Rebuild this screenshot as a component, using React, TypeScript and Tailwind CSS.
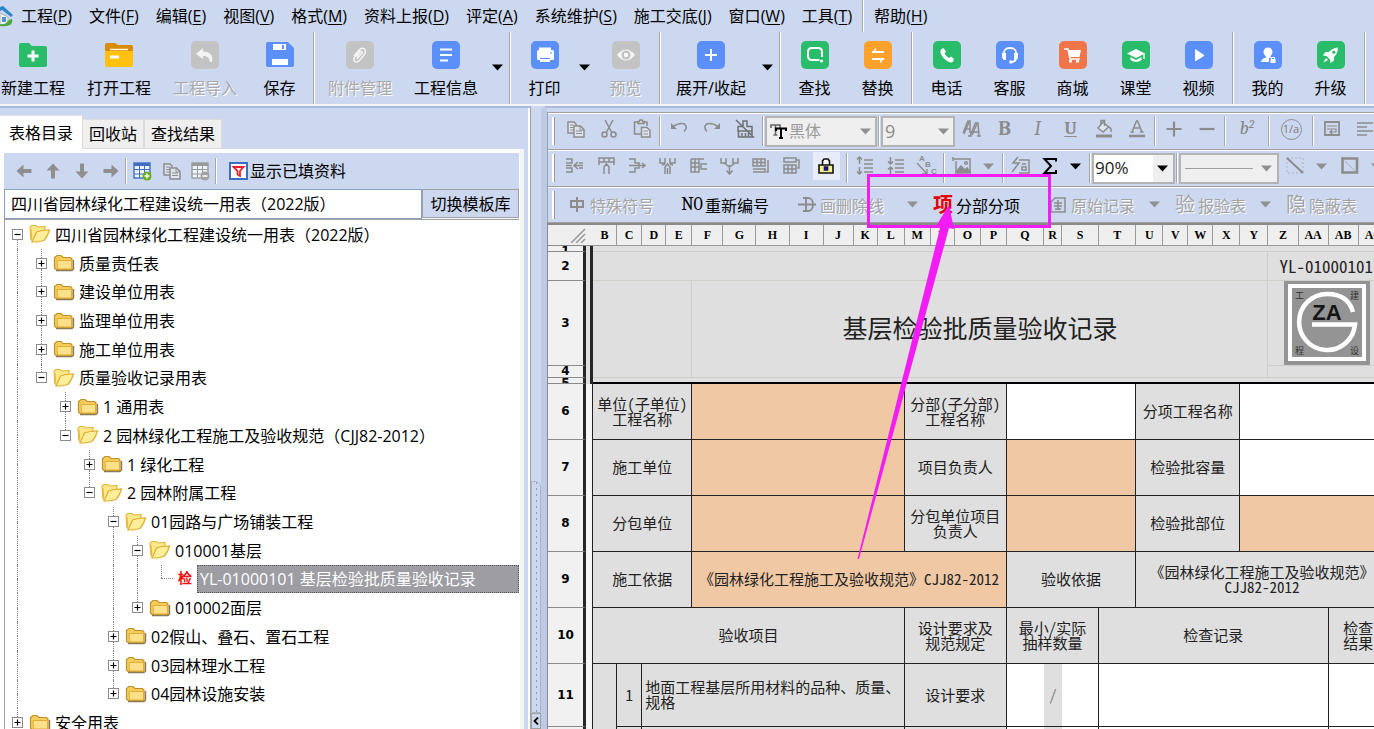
import type { ReactNode } from "react";

/* ---------- shared bits ---------- */

function Sep({ className = "" }: { className?: string }) {
  return <span className={`w-[2px] shrink-0 border-l border-[#a6a6a6] bg-white ${className}`} />;
}

function Caret({ color = "#000" }: { color?: string }) {
  return (
    <svg width="12" height="7" viewBox="0 0 12 7" className="shrink-0" aria-hidden="true">
      <path d="M0 0.5H11L5.5 6.5Z" fill={color} />
    </svg>
  );
}

/** Outline glyph used by the grey editing toolbars. */
function Ico({
  children,
  size = 20,
  color = "#8c8c8c",
  width = 1.5,
}: {
  children: ReactNode;
  size?: number;
  color?: string;
  width?: number;
}) {
  return (
    <svg
      width={size}
      height={size}
      viewBox="0 0 20 20"
      fill="none"
      stroke={color}
      strokeWidth={width}
      className="shrink-0"
      aria-hidden="true"
    >
      {children}
    </svg>
  );
}

/* ---------- menu bar ---------- */

const MENUS: [string, string][] = [
  ["工程", "P"],
  ["文件", "F"],
  ["编辑", "E"],
  ["视图", "V"],
  ["格式", "M"],
  ["资料上报", "D"],
  ["评定", "A"],
  ["系统维护", "S"],
  ["施工交底", "J"],
  ["窗口", "W"],
  ["工具", "T"],
];

function MenuItem({ label, hotkey }: { label: string; hotkey: string }) {
  return (
    <button type="button" className="h-full shrink-0 px-2 whitespace-nowrap">
      {label}(<span className="underline underline-offset-2">{hotkey}</span>)
    </button>
  );
}

function MenuBar() {
  return (
    <nav className="flex h-8 items-center gap-px leading-8">
      <svg width="14" height="22" viewBox="0 0 14 22" className="-mr-[2px] shrink-0" aria-hidden="true">
        <path d="M0 8L8 12V19L0 20Z" fill="#f4f6f4" stroke="#9fb2c4" />
        <path d="M0 2L3 1L13 10L11 12L2 5L0 6Z" fill="#2f86c6" />
        <path d="M2 12H6V17H2Z" fill="#4f93cf" />
        <path d="M0 19Q5 20 7 17Q9 14 12 14Q13 18 10 20Q5 22 0 21Z" fill="#4ca641" />
      </svg>
      {MENUS.map(([label, hotkey]) => (
        <MenuItem key={label} label={label} hotkey={hotkey} />
      ))}
      <Sep className="mx-px h-full" />
      <MenuItem label="帮助" hotkey="H" />
    </nav>
  );
}

/* ---------- main toolbar ---------- */

const BLUE = "#5b8ff9";
const GREEN = "#29bd6b";
const GREY = "#c3c3c3";

function Tile({ fill, children }: { fill: string; children: ReactNode }) {
  return (
    <svg width="28" height="28" viewBox="0 0 28 28" aria-hidden="true">
      <rect width="28" height="28" rx="5" fill={fill} />
      {children}
    </svg>
  );
}

const bigIcons: Record<string, ReactNode> = {
  newProject: (
    <svg width="28" height="28" viewBox="0 0 28 28" aria-hidden="true">
      <path d="M0 4Q0 2 2 2H10L13 5H26Q28 5 28 7V24Q28 26 26 26H2Q0 26 0 24Z" fill={GREEN} />
      <path d="M14 9.500V20.500M8.500 15H19.500" stroke="#fff" strokeWidth="3" />
    </svg>
  ),
  openProject: (
    <svg width="28" height="28" viewBox="0 0 28 28" aria-hidden="true">
      <path d="M0 4Q0 2 2 2H10L13 4H26Q28 4 28 6V12H0Z" fill="#d98b08" />
      <path d="M0 10H28V24Q28 26 26 26H2Q0 26 0 24Z" fill="#ffc10d" />
      <path d="M5 8.500H23" stroke="#fff4d0" strokeWidth="1.500" />
      <path d="M5 16H14" stroke="#fff" strokeWidth="3" />
    </svg>
  ),
  importProject: (
    <Tile fill={GREY}>
      <path d="M12 7L5 13L12 18V15Q18 14 19 21H21Q23 11 12 10.500Z" fill="#f3f3f3" />
    </Tile>
  ),
  save: (
    <svg width="28" height="28" viewBox="0 0 28 28" aria-hidden="true">
      <path d="M0 3Q0 1 2 1H22L28 7V24Q28 26 26 26H2Q0 26 0 24Z" fill={BLUE} />
      <path d="M7 3H20V9H7Z" fill="#fff" />
      <path d="M17 4V8" stroke={BLUE} strokeWidth="2" />
      <path d="M6 18H22V24H6Z" fill="#fff" />
    </svg>
  ),
  attach: (
    <Tile fill={GREY}>
      <path
        d="M8 15L13 9Q16 6 18.500 8Q20.500 11 18 14L13 20Q10.500 22 8.500 20Q7 18 9 15.500L14.500 9.500M11 18L16.500 11.500Q15 9.500 13.500 12L10.500 16"
        fill="none"
        stroke="#f3f3f3"
        strokeWidth="1.500"
      />
    </Tile>
  ),
  info: (
    <Tile fill={BLUE}>
      <path d="M8 8.500H20M8 14H20M8 19.500H16" stroke="#fff" strokeWidth="1.800" />
    </Tile>
  ),
  print: (
    <Tile fill={BLUE}>
      <path d="M8 6.500H20V9H8Z" fill="#fff" />
      <rect x="6" y="9" width="17" height="10" rx="1.500" fill="#fff" />
      <path d="M9 18.500H19V21H9Z" fill="#fff" />
      <path d="M9 17.500H19M19 12H21" stroke={BLUE} />
    </Tile>
  ),
  preview: (
    <Tile fill={GREY}>
      <path d="M5 14Q14 3 23 14Q14 25 5 14Z" fill="#f6f6f6" />
      <circle cx="14" cy="14" r="4.500" fill={GREY} />
      <circle cx="14" cy="14" r="2.200" fill="#fff" />
    </Tile>
  ),
  expand: (
    <Tile fill={BLUE}>
      <path d="M14 8V20M8 14H20" stroke="#fff" strokeWidth="2" />
    </Tile>
  ),
  find: (
    <Tile fill={GREEN}>
      <path d="M18.500 19H11Q7 19 7 15V11Q7 7 11 7H17Q21 7 21 11V16" fill="none" stroke="#fff" strokeWidth="2" />
      <circle cx="20.500" cy="20" r="1.600" fill="#fff" />
    </Tile>
  ),
  replace: (
    <Tile fill="#ffa12b">
      <path d="M8 11H20M8 18H20" stroke="#fff" strokeWidth="2" />
      <path d="M12 6.500V12H7.500ZM16 22.500V17H20.500Z" fill="#fff" />
    </Tile>
  ),
  phone: (
    <Tile fill={GREEN}>
      <path
        d="M8 8.500L10.500 7L13 10.500L11.500 12.500Q13 15.500 16 17L18 15.500L21 18L20 20.500Q18 22.500 14 20Q9 16.500 7.500 12Q7 9.500 8 8.500Z"
        fill="#fff"
      />
    </Tile>
  ),
  service: (
    <Tile fill={BLUE}>
      <path d="M8 14Q7 7 14 7Q21 7 20 14M20 17Q20 21 15 21" fill="none" stroke="#fff" strokeWidth="1.800" />
      <path d="M6 12H10V19H8Q6 18 6 16ZM18 12H22V16Q22 18 20 19H18Z" fill="#fff" />
      <circle cx="15" cy="21" r="1.800" fill="#fff" />
    </Tile>
  ),
  cart: (
    <Tile fill="#f2754a">
      <path d="M5 8H9L11 18H21" fill="none" stroke="#fff" strokeWidth="1.500" />
      <path d="M9 9H22L20.500 16H10.500Z" fill="#fff" />
      <path d="M10 19H13V21.500H10ZM17 19H20V21.500H17Z" fill="#fff" />
    </Tile>
  ),
  lesson: (
    <Tile fill={GREEN}>
      <path d="M14 8L23 12.500L14 17L5 12.500Z" fill="#fff" />
      <path d="M8.500 16V19Q14 23 19.500 19V16L14 19Z" fill="#fff" />
      <path d="M22 12.500V18" stroke="#fff" strokeWidth="1.300" />
    </Tile>
  ),
  video: (
    <Tile fill={BLUE}>
      <path d="M10 8.500Q10 8 11 8.500L19 14Q19.500 14.500 19 15L11 20Q10 20.500 10 19.500Z" fill="#fff" />
    </Tile>
  ),
  mine: (
    <Tile fill={BLUE}>
      <circle cx="14" cy="11" r="4.500" fill="#fff" />
      <path d="M12 14H16L17 17H15V21H7Q8 17 12 16.500Z" fill="#fff" />
      <path d="M16.500 18H21.500V22H16.500Z" fill="#fff" />
      <path d="M17.500 18V16.500H20.500V18" fill="none" stroke="#fff" />
    </Tile>
  ),
  upgrade: (
    <Tile fill={GREEN}>
      <path
        d="M21 6.500Q15 7 12 11H8.500L6 14.500L9.500 15L13 18.500L13.500 22L17 19.500V16Q21 12 21 6.500Z"
        fill="#fff"
      />
      <path d="M9 17L6.500 21.500L11 19" fill="#fff" />
      <circle cx="16.800" cy="11.200" r="1.600" fill={GREEN} />
    </Tile>
  ),
};

type BigTool = { icon: string; label: string; disabled?: boolean; menu?: boolean };

const TOOL_GROUPS: BigTool[][] = [
  [
    { icon: "newProject", label: "新建工程" },
    { icon: "openProject", label: "打开工程" },
    { icon: "importProject", label: "工程导入", disabled: true },
    { icon: "save", label: "保存" },
  ],
  [
    { icon: "attach", label: "附件管理", disabled: true },
    { icon: "info", label: "工程信息", menu: true },
  ],
  [
    { icon: "print", label: "打印", menu: true },
    { icon: "preview", label: "预览", disabled: true },
  ],
  [{ icon: "expand", label: "展开/收起", menu: true }],
  [
    { icon: "find", label: "查找" },
    { icon: "replace", label: "替换" },
  ],
  [
    { icon: "phone", label: "电话" },
    { icon: "service", label: "客服" },
    { icon: "cart", label: "商城" },
    { icon: "lesson", label: "课堂" },
    { icon: "video", label: "视频" },
  ],
  [
    { icon: "mine", label: "我的" },
    { icon: "upgrade", label: "升级" },
  ],
];

function bigWidth(label: string) {
  if (label.length > 4) return "w-24";
  return label.length > 2 ? "w-[86px]" : "w-[63px]";
}

function MainToolbar() {
  return (
    <div className="-ml-[10px] flex h-[72px]">
      {TOOL_GROUPS.map((group, i) => (
        <div key={i} className="flex shrink-0">
          {group.map((t) => (
            <div key={t.label} className="flex">
              <button
                type="button"
                disabled={t.disabled}
                className={`flex flex-col items-center pt-[9px] ${bigWidth(t.label)} ${
                  t.disabled ? "text-[#a9a9a9] [text-shadow:1px_1px_0_#fff]" : "text-black"
                }`}
              >
                {bigIcons[t.icon]}
                <span className="mt-[7px] leading-6 whitespace-nowrap">{t.label}</span>
              </button>
              {t.menu && (
                <button type="button" aria-label={`${t.label}菜单`} className="flex w-[18px] justify-center pt-8">
                  <Caret />
                </button>
              )}
            </div>
          ))}
          <Sep className="mx-[2px]" />
        </div>
      ))}
    </div>
  );
}

/* ---------- left panel ---------- */

function ArrowIcon({ turn }: { turn: string }) {
  return (
    <svg width="16" height="16" viewBox="0 0 16 16" className={turn} aria-hidden="true">
      <path d="M0.500 8L7.500 1.500V6H15.500V10H7.500V14.500Z" fill="#8f8f8f" />
    </svg>
  );
}

function TableIcon({ color, badge, mark }: { color: string; badge: string; mark: string }) {
  return (
    <svg width="19" height="19" viewBox="0 0 19 19" aria-hidden="true">
      <rect x="1" y="1" width="16" height="15" fill="#eef3fb" stroke={color} strokeWidth="1.400" />
      <path d="M1 2.500H17" stroke={color} strokeWidth="3" />
      <path d="M1 7.500H17M1 12H17M6.500 3V16M11.500 3V16" stroke={color} />
      <circle cx="14" cy="14" r="4.500" fill={badge} />
      <path d={mark} stroke="#fff" strokeWidth="1.500" />
    </svg>
  );
}

function CopyGlyph() {
  return (
    <>
      <path d="M2 3H8L10 5V14H2Z" fill="#dfe5f0" />
      <path d="M4 6H8M4 8.500H8M4 11H8" strokeWidth="1" />
      <path d="M8 7H14.500L18 10.500V18H8Z" fill="#dfe5f0" />
      <path d="M14 7V11H18M10 12H16M10 14.500H16" strokeWidth="1" />
    </>
  );
}

type NodeState = "open" | "closed" | "doc";

interface TreeRow {
  /** One mark per ancestor level: "|" continues the guide line, " " leaves it blank. */
  guides: string;
  state: NodeState;
  label: string;
  /** The guide line goes on below this row. */
  more?: boolean;
  root?: boolean;
}

const TREE: TreeRow[] = [
  { guides: "", state: "open", label: "四川省园林绿化工程建设统一用表（2022版）", more: true, root: true },
  { guides: "|", state: "closed", label: "质量责任表", more: true },
  { guides: "|", state: "closed", label: "建设单位用表", more: true },
  { guides: "|", state: "closed", label: "监理单位用表", more: true },
  { guides: "|", state: "closed", label: "施工单位用表", more: true },
  { guides: "|", state: "open", label: "质量验收记录用表" },
  { guides: "| ", state: "closed", label: "1 通用表", more: true },
  { guides: "| ", state: "open", label: "2 园林绿化工程施工及验收规范（CJJ82-2012）" },
  { guides: "|  ", state: "closed", label: "1 绿化工程", more: true },
  { guides: "|  ", state: "open", label: "2 园林附属工程" },
  { guides: "|   ", state: "open", label: "01园路与广场铺装工程", more: true },
  { guides: "|   |", state: "open", label: "010001基层", more: true },
  { guides: "|   ||", state: "doc", label: "YL-01000101 基层检验批质量验收记录" },
  { guides: "|   |", state: "closed", label: "010002面层" },
  { guides: "|   ", state: "closed", label: "02假山、叠石、置石工程", more: true },
  { guides: "|   ", state: "closed", label: "03园林理水工程", more: true },
  { guides: "|   ", state: "closed", label: "04园林设施安装" },
  { guides: "", state: "closed", label: "安全用表" },
];

function Folder({ open }: { open: boolean }) {
  return open ? (
    <svg width="22" height="20" viewBox="0 0 22 20" className="shrink-0" aria-hidden="true">
      <path d="M2 16L1 3L3 1.500H7L9 3L16 2.500V6" fill="#fce88a" stroke="#e3b93c" strokeWidth="1.200" />
      <path d="M3 18L7.500 8L13 6.500L20.500 6Q19 12 15 16.500L8 18Z" fill="#fdee9b" stroke="#dfae2c" strokeWidth="1.200" />
      <path d="M3 18L2 5" stroke="#e3b93c" />
    </svg>
  ) : (
    <svg width="22" height="20" viewBox="0 0 22 20" className="shrink-0" aria-hidden="true">
      <path d="M3 17.500H19L20.500 16V7" fill="none" stroke="#8a7a55" strokeWidth="1.400" />
      <path d="M1.500 15V4.500L4 2.500H8L10 4.500H17.500L19 6V16.500H3Z" fill="#f5cc58" stroke="#c0902a" strokeWidth="1.200" />
      <path d="M4.500 16L4 7.500H18.500V16Z" fill="#fce08a" stroke="#e0ae3a" />
    </svg>
  );
}

function Guide({ top, bottom, children }: { top: boolean; bottom: boolean; children?: ReactNode }) {
  return (
    <span className="flex w-6 shrink-0 flex-col items-center self-stretch">
      <span className={`w-0 flex-1 border-l ${top ? "border-dotted border-[#808080]" : "border-transparent"}`} />
      {children}
      <span className={`w-0 flex-1 border-l ${bottom ? "border-dotted border-[#808080]" : "border-transparent"}`} />
    </span>
  );
}

function TreeItem({ row }: { row: TreeRow }) {
  const doc = row.state === "doc";
  return (
    <li className="flex min-h-0 flex-1 items-center">
      {row.guides.split("").map((g, i) => (
        <Guide key={i} top={g === "|"} bottom={g === "|"} />
      ))}
      {doc ? (
        <Guide top bottom={false}>
          <span className="h-0 w-3 translate-x-[6px] border-t border-dotted border-[#808080]" />
        </Guide>
      ) : (
        <Guide top={!row.root} bottom={!!row.more}>
          <button
            type="button"
            aria-label={row.state === "open" ? "折叠" : "展开"}
            className="flex size-[11px] items-center justify-center border border-[#8c8c8c] bg-white"
          >
            <svg width="7" height="7" viewBox="0 0 7 7" aria-hidden="true">
              <path d={row.state === "open" ? "M0.500 3.500H6.500" : "M0.500 3.500H6.500M3.500 0.500V6.500"} stroke="#000" strokeWidth="1.200" />
            </svg>
          </button>
        </Guide>
      )}
      {doc ? (
        <>
          <span className="w-6 shrink-0 text-center font-serif text-sm font-bold text-[#f01010]">检</span>
          <span className="flex flex-1 items-center self-stretch border border-dotted border-[#555] bg-[#9d9da3] text-white">
            <span className="pl-[2px] leading-6 whitespace-nowrap">{row.label}</span>
          </span>
        </>
      ) : (
        <>
          <Folder open={row.state === "open"} />
          <span className="pt-px pl-1 leading-6 whitespace-nowrap">{row.label}</span>
        </>
      )}
    </li>
  );
}

function LeftPanel() {
  return (
    <aside className="flex w-[531px] shrink-0 flex-col border-t-2 border-r border-t-[#a9badb] border-r-[#a0a0a0] pt-[7px] pr-[6px] shadow-[inset_-2px_0_0_#fff]">
      <div role="tablist" className="flex items-end">
        <button type="button" role="tab" aria-selected="true" className="h-[34px] border-t border-[#e0e0e0] bg-white px-[9px] leading-[28px]">
          表格目录
        </button>
        <button type="button" role="tab" aria-selected="false" className="h-[30px] border border-[#dcdcdc] bg-[#efefef] px-[6px] leading-7">
          回收站
        </button>
        <button type="button" role="tab" aria-selected="false" className="h-[30px] border border-[#dcdcdc] bg-[#efefef] px-[6px] leading-7">
          查找结果
        </button>
      </div>

      <div className="flex min-h-0 flex-1 flex-col border-r-4 border-l-4 border-white border-r-[#f4f4f4] bg-white pt-1 pr-[1px]">
        <div className="flex h-9 shrink-0 items-center bg-[#ccd8ef] pl-[5px]">
          {["rotate-0", "rotate-90", "-rotate-90", "rotate-180"].map((turn, i) => (
            <button key={turn} type="button" aria-label={["后退", "上移", "下移", "前进"][i]} className="flex w-[29px] justify-center">
              <ArrowIcon turn={turn} />
            </button>
          ))}
          <Sep className="h-[26px]" />
          <button type="button" aria-label="添加表格" className="ml-px flex w-[29px] justify-center">
            <TableIcon color="#3f6ec0" badge="#6bab1e" mark="M11.500 14H16.500M14 11.500V16.500" />
          </button>
          <button type="button" disabled aria-label="复制表格" className="flex w-[29px] justify-center">
            <Ico>
              <CopyGlyph />
            </Ico>
          </button>
          <button type="button" disabled aria-label="删除表格" className="flex w-[29px] justify-center">
            <TableIcon color="#9a9a9a" badge="#a2a2a2" mark="M11.500 14H16.500" />
          </button>
          <Sep className="h-[26px]" />
          <button type="button" className="ml-3 flex items-center gap-[2px]">
            <svg width="19" height="18" viewBox="0 0 19 18" aria-hidden="true">
              <rect x="1" y="1" width="17" height="16" fill="#fff" stroke="#3c6cc4" strokeWidth="2" />
              <path d="M4.500 5H14.500L11 9V14L8.500 12.500V9Z" fill="none" stroke="#e8202a" strokeWidth="1.800" />
            </svg>
            <span className="leading-6">显示已填资料</span>
          </button>
        </div>

        <div className="flex h-[30px] shrink-0">
          <input
            aria-label="模板库"
            readOnly
            value="四川省园林绿化工程建设统一用表（2022版）"
            className="min-w-0 flex-1 border border-[#86a2c9] bg-white px-[6px]"
          />
          <button type="button" className="h-[29px] w-[97px] border border-[#a0a0a0] bg-[#ccd8ef] leading-6">
            切换模板库
          </button>
        </div>

        <div className="min-h-0 flex-1 overflow-hidden border-t border-l border-[#a0a0a0] bg-white">
          <ul className="flex h-[517px] flex-col">
            {TREE.map((row) => (
              <TreeItem key={row.label} row={row} />
            ))}
          </ul>
        </div>
      </div>
    </aside>
  );
}

function Splitter() {
  return (
    <div className="flex w-[10px] shrink-0 flex-col pt-[375px]">
      <div className="flex-1 rounded-tr-md border border-[#a9b4c8] bg-[radial-gradient(circle,#8f98aa_1px,transparent_1px)] bg-[length:5px_6px] bg-center bg-repeat-y" />
      <button type="button" aria-label="收起面板" className="flex h-4 items-center justify-center border border-[#a0a0a0]">
        <svg width="6" height="8" viewBox="0 0 6 8" aria-hidden="true">
          <path d="M5 0.500L1.500 4L5 7.500" fill="none" stroke="#000" strokeWidth="1.800" />
        </svg>
      </button>
    </div>
  );
}

/* ---------- editing toolbars ---------- */

function Tool({
  label,
  width = "w-[33px]",
  checked,
  children,
}: {
  label: string;
  width?: string;
  checked?: boolean;
  children: ReactNode;
}) {
  return (
    <button type="button" aria-label={label} title={label} className={`flex h-8 shrink-0 items-center justify-center pb-1 ${width}`}>
      {checked ? <span className="flex h-7 w-[27px] items-center justify-center bg-[#e6edf9]">{children}</span> : children}
    </button>
  );
}

function Strip({ children }: { children: ReactNode }) {
  return (
    <div className="flex h-[37px] shrink-0 items-center border-t border-[#a0a0a0] pl-1 shadow-[inset_0_1px_0_#fff]">
      <span className="mr-1 h-7 w-[3px] shrink-0 border-r border-[#9a9a9a] bg-white" />
      {children}
    </div>
  );
}

const SEP = "mx-[1px] h-[30px]";
const N31 = "w-[31px]";

function FontStrip() {
  return (
    <Strip>
      <Tool label="复制"><Ico><CopyGlyph /></Ico></Tool>
      <Tool label="剪切">
        <Ico>
          <path d="M6 1L12.500 13M14 1L7.500 13" />
          <circle cx="5.500" cy="15.500" r="2.500" />
          <circle cx="14.500" cy="15.500" r="2.500" />
        </Ico>
      </Tool>
      <Tool label="粘贴">
        <Ico>
          <path d="M9 15H2.500V3H15V7" />
          <path d="M6 4.500V2.500H7.500L8 1H10L10.500 2.500H12V4.500Z" fill="#dfe5f0" />
          <path d="M9.500 8.500H15L18 11.500V18H9.500Z" fill="#dfe5f0" />
          <path d="M11.500 12H16M11.500 15H16" strokeWidth="1" />
        </Ico>
      </Tool>
      <Sep className={SEP} />
      <Tool label="撤销">
        <Ico>
          <path d="M3.500 8Q10 3 15.500 5Q19 8.500 15 12.500" />
          <path d="M2 4V10H8Z" fill="#8c8c8c" stroke="none" />
        </Ico>
      </Tool>
      <Tool label="重做">
        <Ico>
          <path d="M16.500 8Q10 3 4.500 5Q1 8.500 5 12.500" />
          <path d="M18 4V10H12Z" fill="#8c8c8c" stroke="none" />
        </Ico>
      </Tool>
      <Tool label="清除格式">
        <Ico color="#6f6f6f">
          <path d="M8 7.500V2H12V7.500H17V12H3V7.500ZM3.500 12V18H17V12M7 18V14M10.500 18V14M13.500 18V14M1 1L19 18.500" />
        </Ico>
      </Tool>
      <Sep className={SEP} />
      <span className="relative flex h-[31px] w-28 shrink-0 items-center border-2 border-[#b4b4b4] bg-[#efefef]">
        <svg width="17" height="16" viewBox="0 0 17 16" className="absolute left-[3px]" aria-hidden="true">
          <path d="M1 5V2H10V5M5.500 2V12M3.500 12H7.500" fill="none" stroke="#666" strokeWidth="1.600" />
          <path d="M6 8V5.500H16V8M11 5.500V15M9 15H13" fill="none" stroke="#000" strokeWidth="2" />
        </svg>
        <select aria-label="字体" disabled className="w-full appearance-none pl-[22px] text-[#9c9c9c] opacity-100">
          <option>黑体</option>
        </select>
        <span className="pointer-events-none absolute right-[3px]"><Caret color="#909090" /></span>
      </span>
      <Sep className={SEP} />
      <span className="relative flex h-[31px] w-[74px] shrink-0 items-center border-2 border-[#b4b4b4] bg-[#efefef]">
        <select aria-label="字号" disabled className="w-full appearance-none pl-[2px] text-lg text-[#8c8c8c] opacity-100">
          <option>9</option>
        </select>
        <span className="pointer-events-none absolute right-[3px]"><Caret color="#909090" /></span>
      </span>
      <Tool label="字体设置">
        <Ico>
          <path d="M1 14L6 2H8V14M3 10H8M8 17L13.500 4H16L17 17M10 13H16.500M15 17H19M6 17H10" />
          <path d="M2 15L7 3M10 16L15 4.500" />
        </Ico>
      </Tool>
      <Tool label="加粗"><span className="font-serif text-xl font-bold text-[#8c8c8c]">B</span></Tool>
      <Tool label="倾斜"><span className="font-serif text-xl text-[#8c8c8c] italic">I</span></Tool>
      <Tool label="下划线"><span className="font-serif text-lg font-bold text-[#8c8c8c] underline underline-offset-2">U</span></Tool>
      <Tool label="填充色">
        <Ico>
          <path d="M9 3L4 9L9 13L14.500 8Z" fill="#dfe5f0" />
          <path d="M7 6V1.500H10.500V7M14.500 8Q18 9 17 13" />
          <path d="M2 17H18" strokeWidth="3" />
        </Ico>
      </Tool>
      <Tool label="字体颜色">
        <Ico>
          <path d="M5 13L9.500 2H10.500L15 13M7 9H13M3.500 13H7M13 13H16.500" />
          <path d="M2 17H18" strokeWidth="2.500" />
        </Ico>
      </Tool>
      <Sep className={SEP} />
      <Tool label="放大"><Ico width={2.2}><path d="M10 2.500V17.500M2.500 10H17.500" /></Ico></Tool>
      <Tool label="缩小"><Ico width={2.2}><path d="M2.500 10H17.500" /></Ico></Tool>
      <Sep className={SEP} />
      <Tool label="上标" width="w-10">
        <span className="font-serif text-lg text-[#858585] italic">b<sup className="text-xs">2</sup></span>
      </Tool>
      <Sep className={SEP} />
      <Tool label="分数" width="w-10">
        <span className="flex size-[21px] items-center justify-center rounded-full border border-[#8c8c8c] text-[11px] text-[#7c7c7c]">1/a</span>
      </Tool>
      <Sep className={SEP} />
      <Tool label="自动换行">
        <Ico width={1.8}>
          <path d="M3 3H17V16H3Z" />
          <path d="M5 7H15M5 10H14V13H8M10 11L8 13L10 15" strokeWidth="1.200" />
        </Ico>
      </Tool>
      <Tool label="左对齐"><Ico><path d="M2 4H18M2 8H12M2 12H18M2 16H12" /></Ico></Tool>
    </Strip>
  );
}

function CellStrip() {
  return (
    <Strip>
      <Tool width={N31} label="插入列"><Ico><path d="M1 3H7V7H1M1 9.500H7M1 12H7V16H1M9 9.500H18M13 6L9 9.500L13 13M14 7H18M14 12H18" /></Ico></Tool>
      <Tool width={N31} label="插入行"><Ico><path d="M3 9V2H18V9M3 6H18M8 2V6M13 2V6M8 18V11L10.500 8L13 11V18" /></Ico></Tool>
      <Tool width={N31} label="删除列"><Ico><path d="M2 3H8V7H12V12H8V16H2M2 9.500H18M15 7L18 9.500L15 12" /></Ico></Tool>
      <Tool width={N31} label="合并行"><Ico><path d="M2 2V7H7V2M12 2V7H17V2M4 9L7 8M15 9L12 8M7 18V11L9.500 8L12 11V18M9.500 12V18" /></Ico></Tool>
      <Tool width={N31} label="左移列"><Ico><path d="M2 3H15M2 3V16H10V3M2 7H10M2 11H10M6 3V16M18 8H12V13H18" /></Ico></Tool>
      <Tool width={N31} label="下移行"><Ico><path d="M1 2V7H6V2M13 2V7H18V2M4 7L9.500 11L15 7M9.500 9V18M6.500 14.500L9.500 18L12.500 14.500" /></Ico></Tool>
      <Tool width={N31} label="追加行"><Ico><path d="M2 3H14V10H2ZM2 6.500H14M6 3V10M10 3V10M2 13H14V16H2M17 4V16H15" /></Ico></Tool>
      <Tool width={N31} label="前置行"><Ico><path d="M2 2H14V6H2ZM2 9H14V17H2ZM2 13H14M6 9V17M10 9V17M14 4H17V12H15" /></Ico></Tool>
      <Tool width="w-[38px]" label="锁定" checked>
        <Ico color="#111" width={1.6}>
          <path d="M6.500 9V5L8 3H12L13.500 5V9" fill="#fff" />
          <path d="M3 9H17V17H3Z" fill="#f7ef8a" />
          <path d="M8.500 11H11.500V14H8.500Z" fill="#101080" stroke="#101080" />
        </Ico>
      </Tool>
      <Sep className={SEP} />
      <Tool width={N31} label="增加行高"><Ico><path d="M4.500 1V8M2 3.500L4.500 1L7 3.500M4.500 11V18M2 15.500L4.500 18L7 15.500M9 4H18M9 8H18M9 12H18M9 16H18" /></Ico></Tool>
      <Tool width={N31} label="减少行高"><Ico><path d="M4.500 1V8M2 5.500L4.500 8L7 5.500M4.500 11V18M2 13.500L4.500 11L7 13.500M9 4H18M9 8H18M9 12H18M9 16H18" /></Ico></Tool>
      <Tool width={N31} label="文字方向">
        <svg width="22" height="22" viewBox="0 0 22 22" aria-hidden="true">
          <path d="M1 8L11 19M11 14V19H6" fill="none" stroke="#8c8c8c" strokeWidth="1.400" />
          <g fontFamily="Liberation Sans" fontSize="8" fontWeight="700" fill="#8c8c8c">
            <text x="3" y="6">A</text>
            <text x="9" y="12">B</text>
            <text x="15" y="19">C</text>
          </g>
        </svg>
      </Tool>
      <Sep className={SEP} />
      <Tool width={N31} label="插入图片">
        <Ico>
          <path d="M1 1V5M1 3H18V17H4V5" />
          <path d="M4 16L9 10L13 14L15 12L18 16Z" fill="#8c8c8c" />
          <circle cx="14" cy="7" r="1.300" />
        </Ico>
      </Tool>
      <Tool width="w-6" label="图片选项"><Caret color="#909090" /></Tool>
      <Sep className={SEP} />
      <Tool width={N31} label="快速填表"><Ico><path d="M7 1L2 7H8L1 16M8 4H18V17H8M11 8H15M11 11H15V14H11Z" /></Ico></Tool>
      <Tool width="w-7" label="求和">
        <Ico color="#000" width={2}>
          <path d="M16 5.500V3H4.500L11 10L4.500 17H16V14" />
        </Ico>
      </Tool>
      <Tool width="w-6" label="求和选项"><Caret /></Tool>
      <Sep className={SEP} />
      <span className="relative flex h-[31px] w-[83px] shrink-0 items-center border-2 border-[#b4b4b4] bg-white">
        <select aria-label="缩放" className="w-full appearance-none pl-px text-[17px] text-[#222]">
          <option>90%</option>
        </select>
        <span className="pointer-events-none absolute inset-y-0 right-0 flex w-5 items-center justify-center bg-[#efefef]"><Caret /></span>
      </span>
      <Sep className={SEP} />
      <button type="button" aria-label="线型" className="flex h-[31px] w-[100px] shrink-0 items-center justify-between border-2 border-[#b4b4b4] bg-[#efefef] px-1">
        <span className="h-px w-[68px] bg-[#a0a0a0]" />
        <Caret color="#909090" />
      </button>
      <Tool width={N31} label="斜线">
        <Ico>
          <path d="M2 2H18V17H2Z" stroke="#b9bfca" strokeDasharray="2 2" />
          <path d="M2 2L18 17" strokeWidth="2" />
        </Ico>
      </Tool>
      <Tool width="w-6" label="斜线选项"><Caret color="#909090" /></Tool>
      <Tool width={N31} label="边框">
        <Ico>
          <path d="M2.500 2.500H17V16.500H2.500Z" strokeWidth="2.600" />
          <path d="M5 5L15 15" stroke="#b9bfca" />
        </Ico>
      </Tool>
      <Tool width="w-6" label="边框选项"><Caret color="#909090" /></Tool>
    </Strip>
  );
}

function FormButton({ icon, label, disabled }: { icon: ReactNode; label: string; disabled?: boolean }) {
  return (
    <button
      type="button"
      disabled={disabled}
      className={`flex h-8 shrink-0 items-center gap-[3px] px-[14px] ${
        disabled ? "text-[#a3a3a3] [text-shadow:1px_1px_0_#fff]" : "text-black"
      }`}
    >
      <span className="flex w-5 shrink-0 items-center justify-center">{icon}</span>
      <span className="pt-[2px] leading-6 whitespace-nowrap">{label}</span>
    </button>
  );
}

function FormStrip() {
  return (
    <div className="flex h-[37px] shrink-0 items-center border-t border-b border-[#a0a0a0] pl-1 shadow-[inset_0_1px_0_#fff]">
      <span className="-mr-[2px] h-7 w-[3px] shrink-0 border-r border-[#9a9a9a] bg-white" />
      <FormButton disabled icon={<Ico width={2}><path d="M10 2V17M4 6H16V12H4Z" /></Ico>} label="特殊符号" />
      <FormButton icon={<span className="font-serif text-lg">N0</span>} label="重新编号" />
      <FormButton disabled icon={<Ico width={1.8}><path d="M6 3H12Q16 4 16 9.500Q16 15 12 16H6M9 3V16M1 9.500H19" /></Ico>} label="画删除线" />
      <button type="button" aria-label="删除线选项" className="flex w-[21px] shrink-0 justify-end"><Caret color="#909090" /></button>
      <FormButton icon={<span className="text-xl font-bold text-[#e60000]">项</span>} label="分部分项" />
      <FormButton disabled icon={<Ico width={1.5}><path d="M3 7V17H17V3H7ZM6 8H14M6 11H14M10 5V15M7 14H13" /></Ico>} label="原始记录" />
      <button type="button" aria-label="原始记录选项" className="flex w-3 shrink-0"><Caret color="#909090" /></button>
      <FormButton disabled icon={<span className="text-xl">验</span>} label="报验表" />
      <button type="button" aria-label="报验表选项" className="flex w-3 shrink-0"><Caret color="#909090" /></button>
      <FormButton disabled icon={<span className="text-xl">隐</span>} label="隐蔽表" />
    </div>
  );
}

/* ---------- worksheet ---------- */

const COLUMNS: [string, number][] = [
  ["B", 24], ["C", 25], ["D", 24], ["E", 26], ["F", 31], ["G", 33], ["H", 33], ["I", 34],
  ["J", 30], ["K", 24], ["L", 27], ["M", 26], ["N", 24], ["O", 26], ["P", 26], ["Q", 37],
  ["R", 18], ["S", 37], ["T", 37], ["U", 27], ["V", 25], ["W", 25], ["X", 27], ["Y", 28],
  ["Z", 30], ["AA", 30], ["AB", 30], ["AC", 30],
];

const FILL = {
  label: "bg-[#dfdfdf]",
  input: "bg-[#f0c8a4]",
  blank: "bg-white",
};

function Cell({
  span = 1,
  fill = "label",
  align = "text-center",
  lines = [],
}: {
  span?: number;
  fill?: keyof typeof FILL;
  align?: string;
  lines?: string[];
}) {
  return (
    <td colSpan={span} className={`overflow-hidden border-r border-b border-[#222] p-0 pb-[2px] whitespace-nowrap ${align} ${FILL[fill]}`}>
      {lines.map((line) => (
        <div key={line} className="leading-[15px]">{line}</div>
      ))}
    </td>
  );
}

function RowHead({ n, clipped, children }: { n: string; clipped?: boolean; children?: ReactNode }) {
  return (
    <>
      <th scope="row" className="border-r-[3px] border-b border-r-[#262626] border-b-[#8a8a8a] bg-[#f1f1f1] p-0 font-['DejaVu_Sans'] text-xs leading-[11px] font-bold text-black">
        <div className={clipped ? "h-[5px] overflow-hidden" : "overflow-hidden"}>{n}</div>
      </th>
      {children ?? <td className="border-r border-r-[#222] bg-[#f4f4f4] p-0" />}
    </>
  );
}

/** Gutter beside the frozen heading rows, drawn as a heavy double rule. */
function HeavyGutter() {
  return <td className="border-r-[3px] border-[#262626] bg-[#dfdfdf] p-0" />;
}

function StampLogo() {
  return (
    <svg width="86" height="84" viewBox="0 0 86 84" className="ml-4" role="img" aria-label="ZA">
      <rect width="86" height="84" fill="#949494" />
      <rect x="6" y="5" width="74" height="73" fill="none" stroke="#fff" strokeWidth="4" />
      <path d="M69 31Q64 13 43 13A28 28 0 1 0 71 43.500H28" fill="none" stroke="#fff" strokeWidth="4.500" />
      <text x="43" y="39" textAnchor="middle" fontFamily="Liberation Sans" fontSize="22" fontWeight="700" fill="#151515">ZA</text>
      <g fontFamily="Noto Sans CJK SC" fontSize="9" fill="#333">
        <text x="11" y="18">工</text>
        <text x="66" y="18">建</text>
        <text x="11" y="73">程</text>
        <text x="66" y="73">设</text>
      </g>
    </svg>
  );
}

const pale = "border-r border-b border-[#cfcdc6] bg-[#dfdfdf] p-0";

function Sheet() {
  return (
    <div className="min-h-0 flex-1 overflow-hidden border-t-2 border-l border-[#8a8a8a]">
      <table className="w-[841px] table-fixed border-separate border-spacing-0 font-['Noto_Sans_CJK_SC',sans-serif] text-[15px] text-[#222] [font-feature-settings:'hwid']">
        <colgroup>
          <col className="w-[38px]" />
          <col className="w-[7px]" />
          {COLUMNS.map(([name, width]) => (
            <col key={name} style={{ width }} />
          ))}
        </colgroup>
        <thead>
          <tr className="h-[21px] font-['Liberation_Serif'] text-xs leading-4">
            <th colSpan={2} aria-label="全选" className="border-b border-[#8a8a8a] bg-[#efefef] p-0">
              <svg width="16" height="16" viewBox="0 0 16 16" className="ml-[22px]" aria-hidden="true">
                <path d="M1 16L15 2M6 16L15 7M11 16L15 12" stroke="#999" strokeWidth="1.500" />
              </svg>
            </th>
            {COLUMNS.map(([name]) => (
              <th key={name} scope="col" className="border-r border-b border-[#9a9a9a] bg-[#efefef] p-0 font-bold text-black">
                {name}
              </th>
            ))}
          </tr>
        </thead>
        <tbody>
          <tr className="h-[6px]">
            <RowHead n="1" clipped><HeavyGutter /></RowHead>
            <td colSpan={28} className={pale} />
          </tr>
          <tr className="h-[29px]">
            <RowHead n="2"><HeavyGutter /></RowHead>
            <td colSpan={24} className={pale} />
            <td colSpan={4} className={`${pale} pl-[11px] text-[17px] leading-6 whitespace-nowrap`}>YL-01000101</td>
          </tr>
          <tr className="h-[85px]">
            <RowHead n="3"><HeavyGutter /></RowHead>
            <td rowSpan={2} colSpan={4} className={pale} />
            <td rowSpan={2} colSpan={20} className={`${pale} pb-1 text-center text-[25px] leading-8`}>基层检验批质量验收记录</td>
            <td colSpan={4} className={pale}><StampLogo /></td>
          </tr>
          <tr className="h-3">
            <RowHead n="4"><HeavyGutter /></RowHead>
            <td colSpan={4} className={pale} />
          </tr>
          <tr className="h-[6px]">
            <RowHead n="5" clipped><HeavyGutter /></RowHead>
            <td colSpan={28} className="border-b-2 border-black bg-[#dfdfdf] p-0" />
          </tr>
          <tr className="h-14">
            <RowHead n="6" />
            <Cell span={4} lines={["单位(子单位)", "工程名称"]} />
            <Cell span={7} fill="input" />
            <Cell span={4} lines={["分部(子分部)", "工程名称"]} />
            <Cell span={4} fill="blank" />
            <Cell span={4} lines={["分项工程名称"]} />
            <Cell span={5} fill="blank" />
          </tr>
          <tr className="h-14">
            <RowHead n="7" />
            <Cell span={4} lines={["施工单位"]} />
            <Cell span={7} fill="input" />
            <Cell span={4} lines={["项目负责人"]} />
            <Cell span={4} fill="input" />
            <Cell span={4} lines={["检验批容量"]} />
            <Cell span={5} fill="blank" />
          </tr>
          <tr className="h-14">
            <RowHead n="8" />
            <Cell span={4} lines={["分包单位"]} />
            <Cell span={7} fill="input" />
            <Cell span={4} lines={["分包单位项目", "负责人"]} />
            <Cell span={4} fill="input" />
            <Cell span={4} lines={["检验批部位"]} />
            <Cell span={5} fill="input" />
          </tr>
          <tr className="h-14">
            <RowHead n="9" />
            <Cell span={4} lines={["施工依据"]} />
            <Cell span={11} fill="input" lines={["《园林绿化工程施工及验收规范》CJJ82-2012"]} />
            <Cell span={4} lines={["验收依据"]} />
            <Cell span={9} lines={["《园林绿化工程施工及验收规范》", "CJJ82-2012"]} />
          </tr>
          <tr className="h-14">
            <RowHead n="10" />
            <Cell span={11} lines={["验收项目"]} />
            <Cell span={4} lines={["设计要求及", "规范规定"]} />
            <Cell span={3} lines={["最小/实际", "抽样数量"]} />
            <Cell span={8} lines={["检查记录"]} />
            <Cell span={2} lines={["检查", "结果"]} />
          </tr>
          <tr className="h-[63px]">
            <RowHead n="11" />
            <td rowSpan={2} className="border-r border-[#222] bg-[#dfdfdf] p-0" />
            <Cell lines={["1"]} />
            <Cell span={9} align="text-left pl-[3px]" lines={["地面工程基层所用材料的品种、质量、", "规格"]} />
            <Cell span={4} lines={["设计要求"]} />
            <td className="border-b border-[#222] bg-white p-0" />
            <td className="border-b border-[#222] bg-[#dfdfdf] p-0 text-center text-[#777]">/</td>
            <td className="border-r border-b border-[#222] bg-white p-0" />
            <Cell span={8} fill="blank" />
            <Cell span={2} fill="blank" />
          </tr>
          <tr className="h-14">
            <RowHead n="" />
            <Cell />
            <Cell span={9} />
            <Cell span={4} />
            <td className="bg-white p-0" />
            <td className="bg-[#dfdfdf] p-0" />
            <td className="border-r border-[#222] bg-white p-0" />
            <Cell span={8} fill="blank" />
            <Cell span={2} fill="blank" />
          </tr>
        </tbody>
      </table>
    </div>
  );
}

/** Hand-placed callout: frames the sub-item button and points at it from the sheet. */
function Callout() {
  return (
    <>
      <div className="pointer-events-none absolute top-[174px] left-[867px] h-[54px] w-[184px] border-[3px] border-[#f41cf4]" />
      <svg width="100" height="356" viewBox="0 0 100 356" className="pointer-events-none absolute top-[205px] left-[857px]" aria-hidden="true">
        <path d="M0.500 354L83 23L79 21L92 0L97 24L92 23L2 354Z" fill="#f41cf4" />
      </svg>
    </>
  );
}

export default function App() {
  return (
    <div
      lang="zh-CN"
      className="relative flex h-screen flex-col overflow-hidden bg-[#ccd8ef] font-['Open_Sans','Noto_Sans_CJK_SC',sans-serif] text-base text-black"
    >
      <header className="shrink-0">
        <MenuBar />
        <MainToolbar />
      </header>
      <main className="flex min-h-0 flex-1 border-t-2 border-[#f2f4f8]">
        <LeftPanel />
        <Splitter />
        <section className="flex min-w-0 flex-1 flex-col overflow-hidden rounded-tl-md border-t-2 border-l-[6px] border-t-[#a9badb] border-l-[#bccae6] pt-1">
          <div className="flex shrink-0 flex-col border-l border-[#a0a0a0]">
            <FontStrip />
            <CellStrip />
            <FormStrip />
          </div>
          <Sheet />
        </section>
      </main>
      <Callout />
    </div>
  );
}
